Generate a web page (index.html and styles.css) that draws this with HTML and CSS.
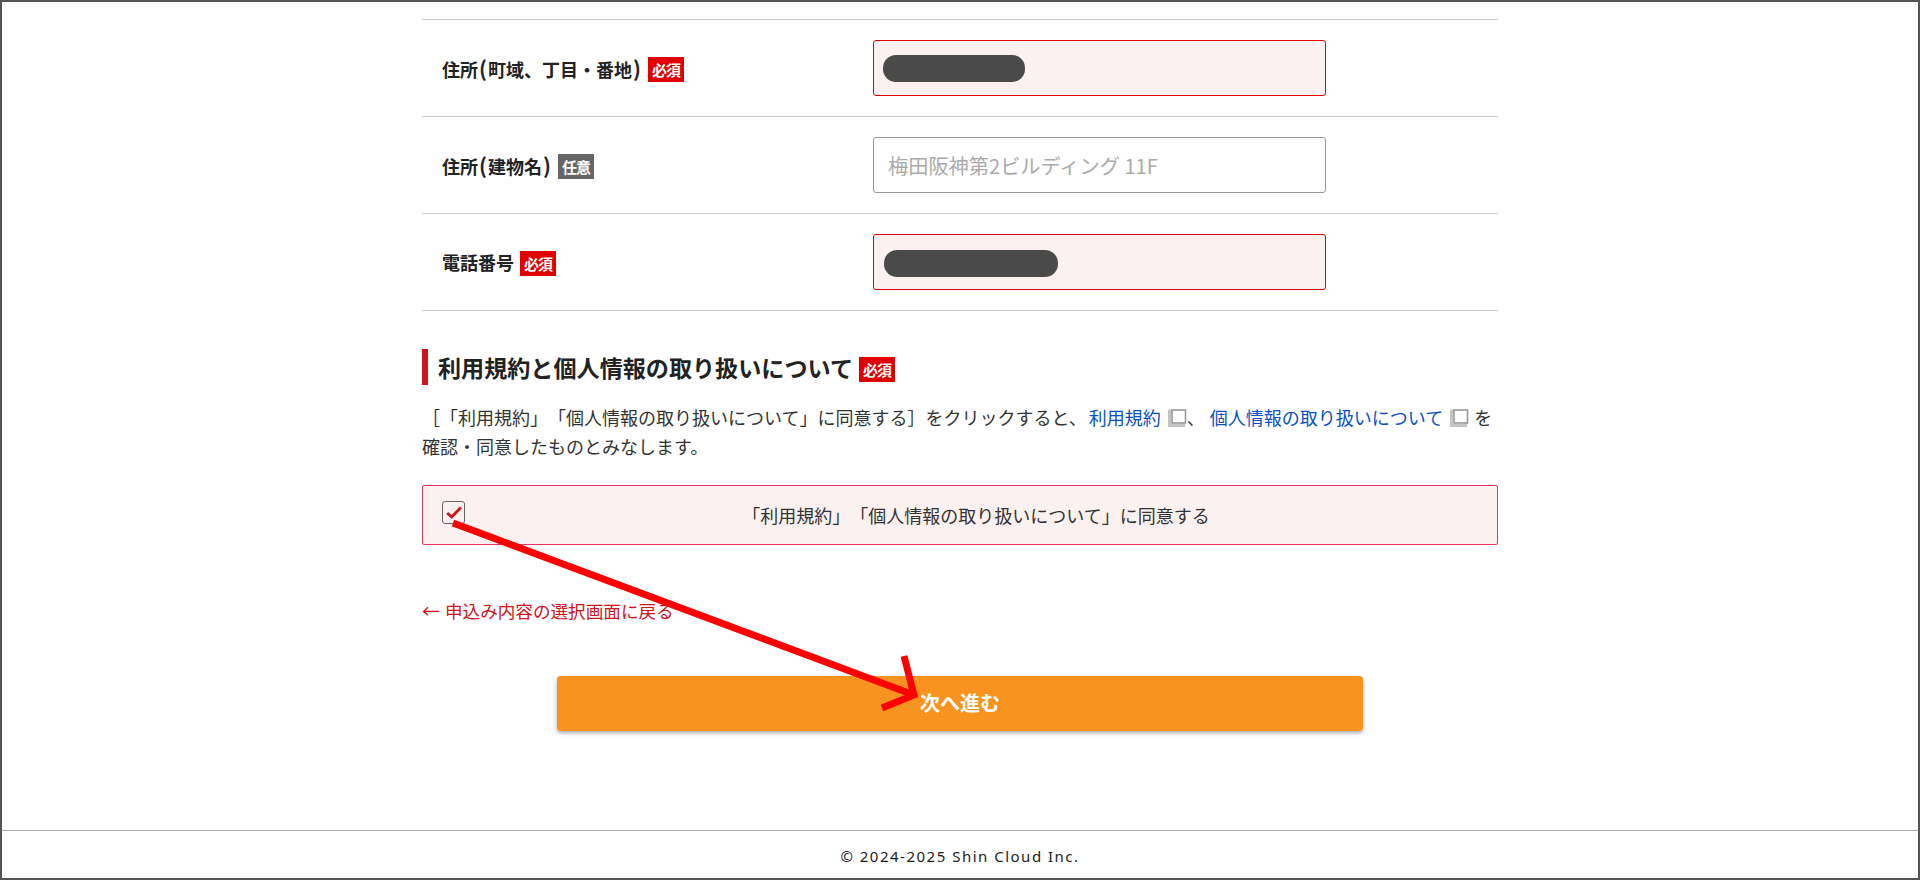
FILE: index.html
```html
<!DOCTYPE html>
<html lang="ja">
<head>
<meta charset="utf-8">
<title>申込みフォーム</title>
<link rel="stylesheet" href="styles.css">
</head>
<body>
<div class="page">
  <main class="content">
    <form class="form">
      <div class="rows">
        <div class="row">
          <div class="row-label"><span>住所<span class="paren">(</span>町域、丁目・番地<span class="paren">)</span></span><span class="badge badge-req">必須</span></div>
          <div class="field field-error"><span class="mask mask-a"></span></div>
        </div>
        <div class="row">
          <div class="row-label"><span>住所<span class="paren">(</span>建物名<span class="paren">)</span></span><span class="badge badge-opt">任意</span></div>
          <input class="field field-input" type="text" placeholder="梅田阪神第2ビルディング 11F">
        </div>
        <div class="row">
          <div class="row-label"><span>電話番号</span><span class="badge badge-req">必須</span></div>
          <div class="field field-error"><span class="mask mask-b"></span></div>
        </div>
      </div>

      <h2 class="section-title"><span>利用規約と個人情報の取り扱いについて</span><span class="badge badge-req">必須</span></h2>
      <p class="terms">［「利用規約」「個人情報の取り扱いについて」に同意する］をクリックすると、<a class="link link-first" href="#">利用規約<svg class="ext" viewBox="0 0 19 18" width="19" height="18"><path d="M4 2H1.5V16.5H15.5V14" fill="none" stroke="#c4c4c4" stroke-width="3"/><rect x="4" y="1" width="13.5" height="13" fill="#fff" stroke="#999" stroke-width="1.6"/></svg></a>、 <a class="link link-second" href="#">個人情報の取り扱いについて<svg class="ext" viewBox="0 0 19 18" width="19" height="18"><path d="M4 2H1.5V16.5H15.5V14" fill="none" stroke="#c4c4c4" stroke-width="3"/><rect x="4" y="1" width="13.5" height="13" fill="#fff" stroke="#999" stroke-width="1.6"/></svg></a> を<br>確認・同意したものとみなします。</p>

      <label class="agree">
        <span class="check"><svg viewBox="0 0 22 22" width="20" height="20"><path d="M3.5 11L8.5 15.5L18.5 5" fill="none" stroke="#c8161d" stroke-width="3.2"/></svg></span>
        <span class="agree-text">「利用規約」「個人情報の取り扱いについて」に同意する</span>
      </label>

      <a class="back" href="#"><span class="back-arrow">←</span> 申込み内容の選択画面に戻る</a>

      <div class="actions"><button class="next" type="button">次へ進む</button></div>
    </form>
  </main>
  <footer class="footer">© 2024-2025 Shin Cloud Inc.</footer>
  <svg class="annotation" viewBox="0 0 1920 880" width="1920" height="880">
    <path d="M453 523L914 695M904 656L914 695L882 708" fill="none" stroke="#ff0000" stroke-width="7"/>
  </svg>
</div>
</body>
</html>
```
FILE: styles.css
```css
* { box-sizing: border-box; }
html, body { margin: 0; padding: 0; }
body {
  font-family: "Noto Sans CJK JP", "Noto Sans", sans-serif;
  color: #222;
  background: #fff;
  text-spacing-trim: space-all;
}
.page {
  position: relative;
  width: 1920px;
  height: 880px;
  overflow: hidden;
  border: 2px solid #555;
  display: flex;
  flex-direction: column;
}
.content { flex: 1; display: flex; justify-content: center; }
.form { width: 1076px; padding-top: 17px; }
.rows { border-top: 1px solid #ccc; }
.row {
  display: grid;
  grid-template-columns: 451px 453px;
  align-items: center;
  padding: 20px 0;
  border-bottom: 1px solid #ccc;
}
.row-label {
  display: flex;
  align-items: center;
  gap: 6px;
  padding-left: 20px;
  font-size: 18px;
  font-weight: 700;
  line-height: 26px;
}
.paren { font-size: 21px; padding: 0 1px; }
.badge {
  display: inline-flex;
  align-items: center;
  justify-content: center;
  width: 36px;
  height: 25px;
  margin-top: 2px;
  color: #fff;
  font-size: 15px;
  font-weight: 700;
  line-height: 1;
  letter-spacing: -1px;
}
.badge-req { background: #e00000; }
.badge-opt { background: #666; }
.field {
  display: flex;
  align-items: center;
  height: 56px;
  border-radius: 3px;
}
.field-error { background: #fcf1f1; border: 1px solid #e00000; }
.field-input {
  width: 453px;
  padding: 0 14px;
  border: 1px solid #999;
  background: #fff;
  font: 20.2px "Noto Sans CJK JP", "Noto Sans", sans-serif;
  color: #222;
}
.field-input::placeholder { color: #aaa; opacity: 1; }
.mask { display: block; height: 27px; background: #4a4a4a; border-radius: 13px; }
.mask-a { width: 142px; margin-left: 9px; }
.mask-b { width: 174px; margin-left: 10px; margin-top: 2px; }
.section-title {
  display: flex;
  align-items: center;
  gap: 6px;
  height: 36px;
  margin: 38px 0 18px;
  padding-left: 10px;
  border-left: 6px solid #d0121b;
  font-size: 23.1px;
  font-weight: 700;
  line-height: 36px;
}
.section-title .badge { margin-top: 5px; }
.terms { margin: 0 0 24px; font-size: 18px; line-height: 29px; color: #333; }
.link { color: #0a50c8; text-decoration: none; }
.link-first { margin-left: 2px; }
.link-second { margin-left: 1px; margin-right: 1px; }
.ext { margin: 0 0 0 7px; vertical-align: -2px; }
.agree {
  display: flex;
  align-items: center;
  height: 60px;
  padding: 0 0 0 19px;
  background: #fcf1f1;
  border: 1px solid #e6375a;
  border-radius: 2px;
}
.check {
  display: flex;
  align-items: center;
  justify-content: center;
  flex: none;
  width: 23px;
  height: 23px;
  margin-top: -5px;
  border: 1px solid #666;
  border-radius: 3px;
}
.agree-text {
  flex: 1;
  padding-right: 10px;
  text-align: center;
  font-size: 18px;
  line-height: 26px;
  color: #333;
}
.back {
  display: block;
  margin-top: 52px;
  font-size: 17.6px;
  line-height: 26px;
  color: #d0121b;
  text-decoration: none;
}
.back-arrow { font-size: 18px; margin-right: 1px; }
.actions { display: flex; justify-content: center; margin-top: 52px; }
.next {
  width: 806px;
  height: 55px;
  padding: 0 0 3px;
  border: 0;
  border-radius: 4px;
  background: #f9931f;
  color: #fff;
  font: 700 20px "Noto Sans CJK JP", "Noto Sans", sans-serif;
  box-shadow: 0 2px 4px rgba(0, 0, 0, .35);
}
.footer {
  height: 48px;
  overflow: hidden;
  border-top: 1px solid #aaa;
  text-align: center;
  font: 15px/50px "Noto Sans", sans-serif;
  letter-spacing: 1.5px;
  color: #222;
}
.annotation { position: absolute; top: -2px; left: -2px; pointer-events: none; }
```
